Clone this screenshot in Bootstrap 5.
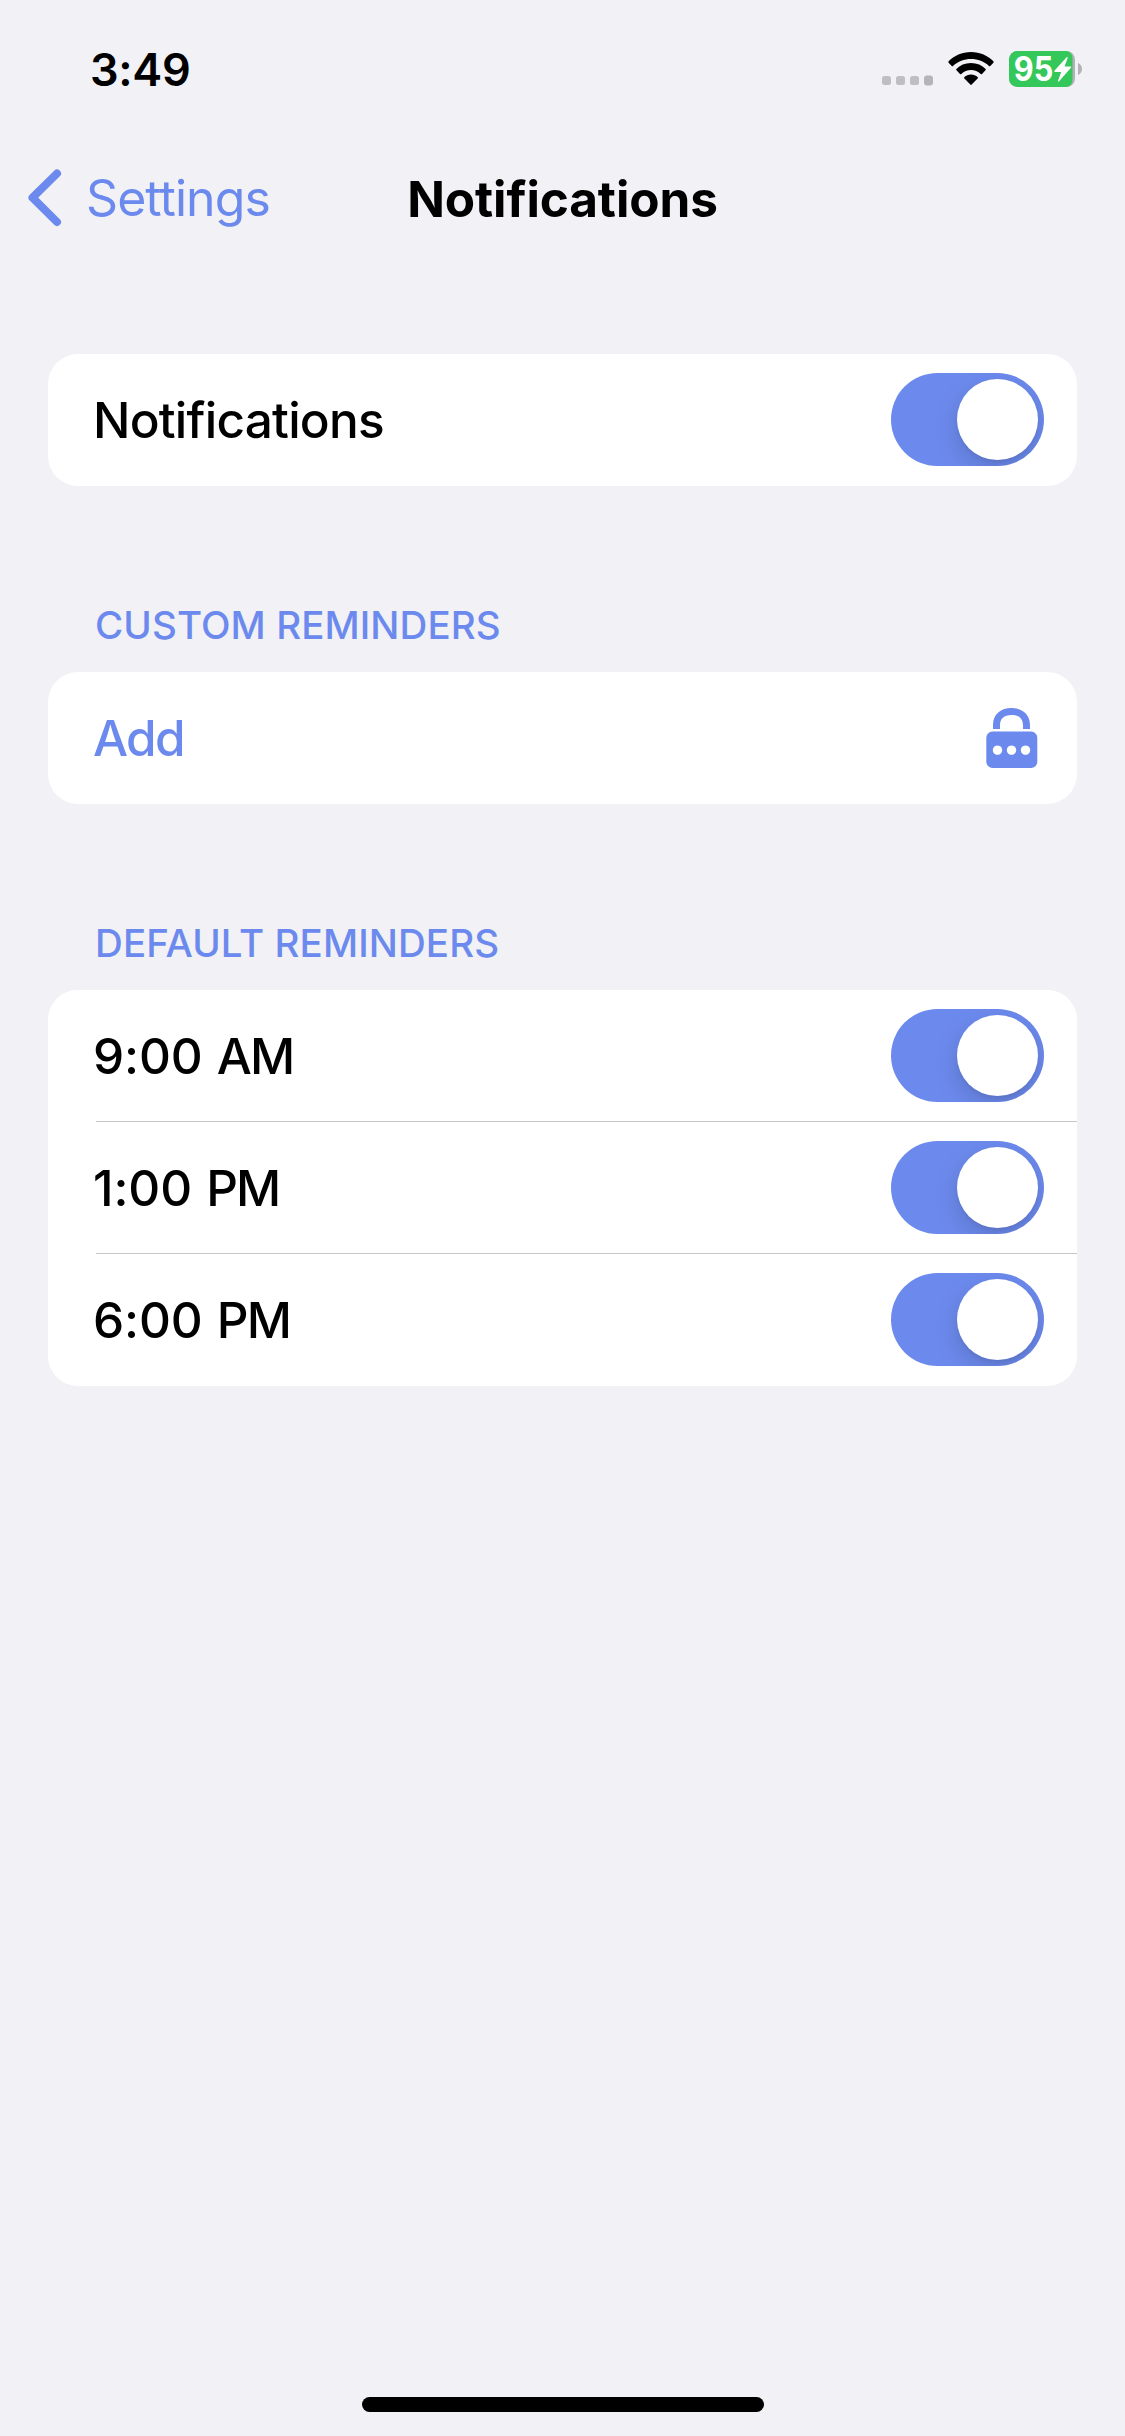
<!DOCTYPE html>
<html lang="en">
<head>
<meta charset="utf-8">
<meta name="viewport" content="width=device-width, initial-scale=1">
<title>Notifications</title>
<link href="https://cdn.jsdelivr.net/npm/bootstrap@5.3.0/dist/css/bootstrap.min.css" rel="stylesheet">
<style>
  :root { --accent: #6c8aed; }
  body { background: #f1f1f6; color: #000; font-family: Inter, "Liberation Sans", sans-serif; line-height: 1; }
  .screen { height: 2436px; overflow: hidden; }
  .status-bar { height: 138px; padding: 0 43px 0 90px; }
  .clock { font-size: 45px; font-weight: 600; letter-spacing: -.32px; }
  .accent { color: var(--accent); }
  .top-nav { height: 120px; padding: 2px 27px 0; --bs-navbar-padding-y: 0; }
  .side { width: 340px; }
  .back-link { font-size: 50px; letter-spacing: -.95px; }
  .back-link svg { margin-right: 24px; }
  .page-title { font-size: 49.5px; font-weight: 700; letter-spacing: -.1px; line-height: 60px; }
  .content { padding: 96px 48px 0; }
  .group-title { font-size: 38.5px; font-weight: 450; line-height: 50px; letter-spacing: .1px; padding: 114px 0 22px 47px; }
  .group { --bs-list-group-border-radius: 30px; background: #fff; border-radius: 30px; overflow: hidden; }
  .setting { height: 132px; padding: 0 33px 0 45px; font-size: 49.5px; font-weight: 500; letter-spacing: -.1px; }
  .setting > span { padding-top: 2px; }
  .ruled { background: linear-gradient(#c6c6c8, #c6c6c8) 48px 131px / 100% 1px no-repeat #fff; }
  .wide-label { letter-spacing: -.77px; }
  .add-label { letter-spacing: -1.7px; }
  .half-day { letter-spacing: -1.8px; margin-left: 1px; }
  .toggle { width: 153px; height: 93px; border-radius: 47px; background: var(--accent); padding: 6px; overflow: hidden; margin-top: -1px; }
  .knob { width: 81px; height: 81px; border-radius: 50%; background: #fff; box-shadow: 0 9px 24px rgba(0,0,0,.15), 0 3px 3px rgba(0,0,0,.05); }
  .lock-icon { margin-right: 6px; }
  .home-bar { width: 402px; height: 15px; border-radius: 8px; background: #000; margin-bottom: 24px; }
</style>
<script src="https://cdn.jsdelivr.net/npm/bootstrap@5.3.0/dist/js/bootstrap.bundle.min.js"></script>
</head>
<body>
<div class="screen d-flex flex-column">
  <header class="status-bar d-flex align-items-center justify-content-between">
    <span class="clock">3:49</span>
    <svg width="200" height="60" viewBox="0 -12 200 60" role="img" aria-label="Wi-Fi, battery 95 percent, charging">
      <g fill="#bebec3"><rect y="25" width="9" height="9" rx="2.5"/><rect x="14" y="25" width="9" height="9" rx="2.5"/><rect x="28" y="25" width="9" height="9" rx="2.5"/><rect x="42" y="24.500" width="9" height="10" rx="3" fill="#b4b4bb"/></g>
      <!-- Wi-Fi arcs -->
      <path d="M89 1C98 1 106 4.700 111.400 10.300Q112 11 111.400 11.700L108.300 14.900Q107.600 15.600 107 15C102 10.200 96 8 89 8S76 10.200 71 15Q70.400 15.600 69.700 14.900L66.600 11.700Q66 11 66.600 10.300C72 4.700 80 1 89 1Z"/>
      <path d="M89 12C95 12 100 14.200 103.600 17.900Q104.200 18.500 103.500 19.200L100 22.900Q99.400 23.500 98.700 22.900C96 20.300 92.800 19 89 19S82 20.300 79.300 22.900Q78.600 23.500 78 22.900L74.500 19.200Q73.800 18.500 74.400 17.900C78 14.200 83 12 89 12Z"/>
      <path d="M89 23.600C91.700 23.600 94 24.500 95.600 26Q96.300 26.700 95.600 27.500L89.700 33.600Q89 34.200 88.300 33.600L82.400 27.500Q81.700 26.700 82.400 26C84 24.500 86.300 23.600 89 23.600Z"/>
      <!-- Battery -->
      <rect x="127" width="66" height="36" rx="8.500" fill="#b1b1b7"/>
      <path d="M135.500 0H184.500Q190.500 1 190.500 8V28Q190.500 35 184.500 36H135.500A8.500 8.500 0 0 1 127 27.500V8.500A8.500 8.500 0 0 1 135.500 0Z" fill="#34c759"/>
      <path d="M196 12Q200 13.800 200 18T196 24Z" fill="#b1b1b7"/>
      <text x="131.800" y="30.300" fill="#fff" font-family="Inter, sans-serif" font-size="34" font-weight="700" textLength="39.500" lengthAdjust="spacingAndGlyphs">95</text>
      <path d="M184.600 6.200 172.400 19.800Q171.900 20.900 173 20.900H179.200L176 29.800Q175.900 31.200 177.100 30.300L189.200 16.600Q189.600 15.500 188.500 15.500H182.500L185.700 6.900Q185.700 5.600 184.600 6.200Z" fill="#fff"/>
    </svg>
  </header>

  <nav class="navbar top-nav flex-nowrap justify-content-between">
    <div class="side">
      <a class="back-link accent text-decoration-none d-inline-flex align-items-center" href="#">
        <svg width="35" height="58" viewBox="0 0 35 58" fill="none" stroke="currentColor" stroke-width="8" stroke-linecap="round" stroke-linejoin="round" aria-hidden="true"><path d="M30 4.500 5.500 28.700 30 53"/></svg>
        <span>Settings</span>
      </a>
    </div>
    <h1 class="page-title m-0">Notifications</h1>
    <div class="side"></div>
  </nav>

  <main class="content flex-grow-1">
    <div class="list-group group">
      <div class="setting d-flex align-items-center justify-content-between"><span class="wide-label">Notifications</span><div class="toggle d-flex justify-content-end" role="switch" aria-checked="true"><div class="knob"></div></div></div>
    </div>

    <h2 class="group-title accent m-0">CUSTOM REMINDERS</h2>
    <div class="list-group group">
      <div class="setting d-flex align-items-center justify-content-between accent"><span class="add-label">Add</span>
        <svg class="lock-icon" width="52" height="60" viewBox="0 0 52 60" fill="currentColor" aria-hidden="true">
          <path d="M7 21V17C7 6 15 0 25.500 0S44 6 44 17V21H37V17.500C37 10.500 33 7 25.500 7S14 10.500 14 17.500V21Z"/>
          <path fill-rule="evenodd" d="M6 23.500H45.500Q51.300 24.500 51.300 30V54Q51 59 45.500 60H6Q.800 59 .300 54V30Q.500 24.500 6 23.500ZM11.500 37.400a4.700 4.700 0 1 0 .01 0ZM25.500 37.400a4.700 4.700 0 1 0 .01 0ZM39.500 37.400a4.700 4.700 0 1 0 .01 0Z"/>
        </svg>
      </div>
    </div>

    <h2 class="group-title accent m-0">DEFAULT REMINDERS</h2>
    <div class="list-group group">
      <div class="setting ruled d-flex align-items-center justify-content-between"><span>9:00 <span class="half-day">AM</span></span><div class="toggle d-flex justify-content-end" role="switch" aria-checked="true"><div class="knob"></div></div></div>
      <div class="setting ruled d-flex align-items-center justify-content-between"><span>1:00 <span class="half-day">PM</span></span><div class="toggle d-flex justify-content-end" role="switch" aria-checked="true"><div class="knob"></div></div></div>
      <div class="setting d-flex align-items-center justify-content-between"><span>6:00 <span class="half-day">PM</span></span><div class="toggle d-flex justify-content-end" role="switch" aria-checked="true"><div class="knob"></div></div></div>
    </div>
  </main>

  <div class="home-bar mx-auto"></div>
</div>
</body>
</html>
